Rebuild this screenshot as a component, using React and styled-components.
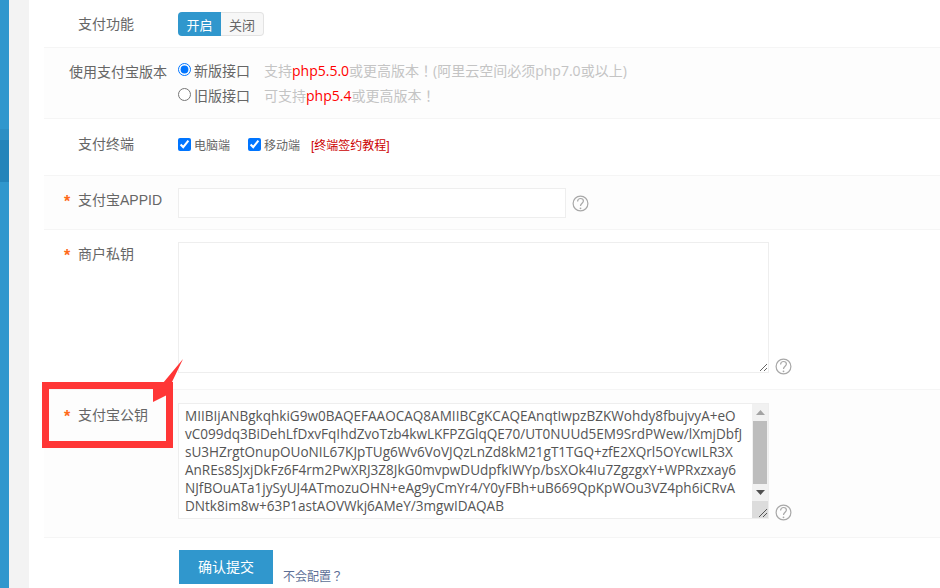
import React from 'react';
import styled, { createGlobalStyle } from 'styled-components';

const KEY_TEXT = [
    'MIIBIjANBgkqhkiG9w0BAQEFAAOCAQ8AMIIBCgKCAQEAnqtIwpzBZKWohdy8fbujvyA+eO',
    'vC099dq3BiDehLfDxvFqIhdZvoTzb4kwLKFPZGlqQE70/UT0NUUd5EM9SrdPWew/lXmjDbfJ',
    'sU3HZrgtOnupOUoNIL67KJpTUg6Wv6VoVJQzLnZd8kM21gT1TGQ+zfE2XQrl5OYcwILR3X',
    'AnREs8SJxjDkFz6F4rm2PwXRJ3Z8JkG0mvpwDUdpfkIWYp/bsXOk4Iu7ZgzgxY+WPRxzxay6',
    'NJfBOuATa1jySyUJ4ATmozuOHN+eAg9yCmYr4/Y0yFBh+uB669QpKpWOu3VZ4ph6iCRvA',
    'DNtk8im8w+63P1astAOVWkj6AMeY/3mgwIDAQAB',
].join('\n');

const HelpIcon = ({ low }) => (
    <HelpSvg viewBox="0 0 17 17" $low={low}>
        <circle cx="8.5" cy="8.5" r="7.4" fill="none" stroke="#a8a8a8" strokeWidth="1.2" />
        <path d="M5.6 6.4c0-1.7 1.2-2.9 2.9-2.9s2.9 1.2 2.9 2.6c0 2.2-2.9 2.3-2.9 5" fill="none" stroke="#a8a8a8" strokeWidth="1.2" />
        <circle cx="8.5" cy="13.3" r="0.9" fill="#a8a8a8" />
    </HelpSvg>
);

const App = () => {
    return (
        <Page>
            <GlobalStyle />
            <Sidebar>
                <SideBand $height={129} $color="#3097cd" />
                <SideBand $height={11} $color="#2d8fc4" />
                <SideBand $height={42} $color="#2484ba" />
                <SideBand $grow $color="#3097cd" />
            </Sidebar>
            <Gutter />
            <Main>
                <Row $height={48} $top={12}>
                    <Label>支付功能</Label>
                    <Field>
                        <Toggle>
                            <ToggleButton $active>开启</ToggleButton>
                            <ToggleButton>关闭</ToggleButton>
                        </Toggle>
                    </Field>
                </Row>
                <Row $height={71} $shaded $top={9}>
                    <Label $long $top={3}>使用支付宝版本</Label>
                    <Field>
                        <RadioLine>
                            <Radio name="version" defaultChecked />
                            <RadioText>新版接口</RadioText>
                            <Hint>支持<Red>php5.5.0</Red>或更高版本！(阿里云空间必须php7.0或以上)</Hint>
                        </RadioLine>
                        <RadioLine>
                            <Radio name="version" />
                            <RadioText>旧版接口</RadioText>
                            <Hint>可支持<Red>php5.4</Red>或更高版本！</Hint>
                        </RadioLine>
                    </Field>
                </Row>
                <Row $height={57} $top={13}>
                    <Label>支付终端</Label>
                    <Field>
                        <CheckLine>
                            <CheckItem>
                                <Check defaultChecked />
                                <CheckText>电脑端</CheckText>
                            </CheckItem>
                            <CheckItem>
                                <Check defaultChecked />
                                <CheckText>移动端</CheckText>
                            </CheckItem>
                            <Tutorial>[终端签约教程]</Tutorial>
                        </CheckLine>
                    </Field>
                </Row>
                <Row $height={54} $shaded $top={12}>
                    <Label $required>支付宝APPID</Label>
                    <Field>
                        <InputLine>
                            <TextInput />
                            <HelpIcon />
                        </InputLine>
                    </Field>
                </Row>
                <Row $height={160} $top={12}>
                    <Label $required>商户私钥</Label>
                    <Field>
                        <AreaLine>
                            <KeyArea $height={131} />
                            <HelpIcon low />
                        </AreaLine>
                    </Field>
                </Row>
                <Row $height={148} $shaded $top={13}>
                    <Label $required>支付宝公钥</Label>
                    <Field>
                        <AreaLine>
                            <AreaWrap>
                                <KeyArea $height={116} defaultValue={KEY_TEXT} spellCheck={false} />
                                <Scrollbar>
                                    <ScrollButton>
                                        <svg width="9" height="5" viewBox="0 0 9 5"><path d="M4.5 0 9 5H0Z" fill="#a3a3a3" /></svg>
                                    </ScrollButton>
                                    <ScrollThumb />
                                    <ScrollButton>
                                        <svg width="9" height="5" viewBox="0 0 9 5"><path d="M0 0H9L4.5 5Z" fill="#505050" /></svg>
                                    </ScrollButton>
                                    <ScrollCorner>
                                        <svg width="10" height="10" viewBox="0 0 10 10">
                                            <path d="M1 9 9 1M5 9 9 5" stroke="#555" strokeWidth="1" />
                                        </svg>
                                    </ScrollCorner>
                                </Scrollbar>
                            </AreaWrap>
                            <HelpIcon low />
                        </AreaLine>
                    </Field>
                </Row>
                <Footer>
                    <SubmitButton>确认提交</SubmitButton>
                    <HelpLink>不会配置？</HelpLink>
                </Footer>
            </Main>
            <Callout>
                <svg width="141" height="90" viewBox="0 0 141 90">
                    <path d="M141 0 130 23 131 33 111 43 111 30 121 24Z" fill="#ff3636" />
                </svg>
            </Callout>
            <CalloutBox />
        </Page>
    );
}

const GlobalStyle = createGlobalStyle`
    html, body {
        margin: 0;
        padding: 0;
        background: #fff;
        overflow: hidden;
    }

    body {
        font-family: "Liberation Sans", "Noto Sans CJK SC", sans-serif;
        font-size: 14px;
        color: #666;
    }
`

const Page = styled.div`
    position: relative;
    display: flex;
    width: 940px;
    height: 588px;
    overflow: hidden;
`

const Sidebar = styled.div`
    width: 9px;
    display: flex;
    flex-direction: column;
`

const SideBand = styled.div`
    height: ${prop => prop.$height ? `${prop.$height}px` : 'auto'};
    flex: ${prop => prop.$grow ? '1' : 'none'};
    background: ${prop => prop.$color};
`

const Gutter = styled.div`
    width: 20px;
    background: #f3f3f3;
`

const Main = styled.div`
    flex: 1;
    padding-left: 15px;
    background: #fff;
`

const Row = styled.div`
    box-sizing: border-box;
    height: ${prop => prop.$height}px;
    padding-top: ${prop => prop.$top || 0}px;
    display: flex;
    align-items: flex-start;
    background: ${prop => prop.$shaded ? '#fdfdfd' : '#fff'};
    border-bottom: 1px solid #f5f5f5;
`

const Label = styled.label`
    position: relative;
    box-sizing: border-box;
    width: 134px;
    margin-top: ${prop => prop.$top || 0}px;
    padding-left: ${prop => prop.$long ? '25px' : '34px'};
    font-size: 14px;
    line-height: 24px;
    color: #666;
    white-space: nowrap;

    &::before {
        content: ${prop => prop.$required ? '"*"' : 'none'};
        position: absolute;
        left: 20px;
        top: 2px;
        font-size: 16px;
        font-weight: bold;
        color: #ff6a1a;
    }
`

const Field = styled.div`
    flex: 1;
`

const Toggle = styled.div`
    display: inline-flex;
    height: 24px;
`

const ToggleButton = styled.span`
    box-sizing: border-box;
    width: 43px;
    display: flex;
    align-items: center;
    justify-content: center;
    font-size: 13px;
    color: ${prop => prop.$active ? '#fff' : '#666'};
    background: ${prop => prop.$active ? '#3097cd' : '#f7f7f7'};
    border: ${prop => prop.$active ? 'none' : '1px solid #e3e3e3'};
    border-left: none;
    border-radius: ${prop => prop.$active ? '4px 0 0 4px' : '0 4px 4px 0'};
`

const RadioLine = styled.div`
    display: flex;
    align-items: center;
    height: 25px;
`

const Radio = styled.input.attrs({ type: 'radio' })`
    width: 13px;
    height: 13px;
    margin: 0 3px 0 0;
`

const RadioText = styled.span`
    width: 70px;
    font-size: 14px;
    color: #666;
`

const Hint = styled.span`
    font-family: "Open Sans", "Noto Sans CJK JP", sans-serif;
    font-size: 14px;
    color: #c4c4c4;
    white-space: nowrap;
`

const Red = styled.span`
    color: #f00;
`

const CheckLine = styled.div`
    display: flex;
    align-items: center;
    height: 24px;
`

const CheckItem = styled.label`
    width: 70px;
    display: flex;
    align-items: center;
`

const Check = styled.input.attrs({ type: 'checkbox' })`
    width: 13px;
    height: 13px;
    margin: 0 3px 0 0;
`

const CheckText = styled.span`
    font-size: 12px;
    color: #666;
`

const Tutorial = styled.a`
    margin-left: -7px;
    font-size: 12px;
    color: #c00;
`

const InputLine = styled.div`
    display: flex;
    align-items: center;
    gap: 6px;
`

const TextInput = styled.input`
    box-sizing: border-box;
    width: 388px;
    height: 30px;
    padding: 0 6px;
    background: #fff;
    border: 1px solid #eee;
    outline: none;
`

const AreaLine = styled.div`
    display: flex;
    align-items: flex-end;
    gap: 6px;
`

const AreaWrap = styled.div`
    position: relative;
    line-height: 0;
`

const KeyArea = styled.textarea`
    display: block;
    box-sizing: border-box;
    width: 591px;
    height: ${prop => prop.$height}px;
    padding: 3px 6px 8px;
    margin: 0;
    font-family: "Open Sans", sans-serif;
    font-size: 13.55px;
    line-height: 18.1px;
    color: #555;
    background: #fff;
    border: 1px solid #eee;
    outline: none;
    resize: vertical;
    overflow: hidden;
`

const Scrollbar = styled.div`
    position: absolute;
    top: 1px;
    right: 1px;
    bottom: 1px;
    width: 16px;
    display: flex;
    flex-direction: column;
    background: #f1f1f1;
`

const ScrollButton = styled.div`
    height: 17px;
    display: flex;
    align-items: center;
    justify-content: center;
`

const ScrollThumb = styled.div`
    height: 63px;
    margin: 0 1px 0;
    background: #bdbdbd;
`

const ScrollCorner = styled.div`
    flex: 1;
    display: flex;
    align-items: flex-end;
    justify-content: flex-end;
    background: #dcdcdc;
`

const HelpSvg = styled.svg`
    width: 17px;
    height: 17px;
    flex: none;
    margin-bottom: ${prop => prop.$low ? '-2px' : '0'};
`

const Footer = styled.div`
    display: flex;
    align-items: flex-end;
    padding: 12px 0 0 135px;
`

const SubmitButton = styled.button`
    width: 94px;
    height: 34px;
    padding: 0 0 2px;
    font-family: inherit;
    font-size: 14px;
    color: #fff;
    background: #3097cd;
    border: none;
`

const HelpLink = styled.a`
    margin: 0 0 -1px 10px;
    font-family: "Liberation Sans", "Noto Sans CJK JP", sans-serif;
    font-size: 12px;
    line-height: 16px;
    color: #5d6f96;
`

const Callout = styled.div`
    position: absolute;
    left: 42px;
    top: 359px;
    line-height: 0;
`

const CalloutBox = styled.div`
    position: absolute;
    left: 42px;
    top: 382px;
    box-sizing: border-box;
    width: 131px;
    height: 66px;
    border: 7px solid #ff3636;
`

export default App;
